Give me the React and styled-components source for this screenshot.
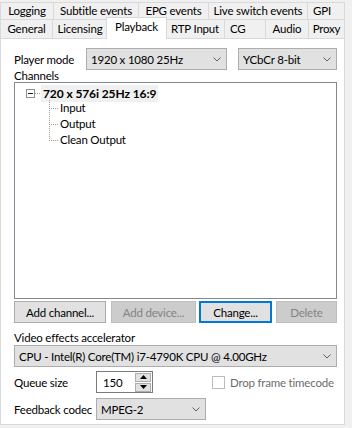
import React from 'react';
import styled, { createGlobalStyle } from 'styled-components';

const GlobalStyle = createGlobalStyle`
  html, body {
    margin: 0;
    padding: 0;
    background: #f0f0f0;
  }
  body {
    font-family: Lato, "Liberation Sans", sans-serif;
    font-size: 11.5px;
    letter-spacing: -0.2px;
    color: #000;
  }
  * { box-sizing: border-box; }
`;

const Window = styled.div`
  width: 352px;
  height: 428px;
  background: #f0f0f0;
  padding-top: 2px;
  overflow: hidden;
`;

const TabRow = styled.div`
  display: flex;
  width: 345px;
  height: ${p => p.$h}px;
`;

const Tab = styled.div`
  width: ${p => p.$w}px;
  flex: none;
  display: flex;
  align-items: center;
  justify-content: ${p => (p.$left ? 'flex-start' : 'center')};
  padding-left: ${p => (p.$left ? 5 : 0)}px;
  border-top: 1px solid #d9d9d9;
  border-left: 1px solid #d9d9d9;
  border-right: ${p => (p.$last ? '1px solid #d9d9d9' : 'none')};
  background: #f0f0f0;
  white-space: nowrap;
  line-height: 1;
`;

const ActiveTab = styled(Tab)`
  position: relative;
  z-index: 1;
  width: ${p => p.$w + 3}px;
  height: 22px;
  margin: -2px -2px 0 -1px;
  padding-bottom: 3px;
  border-right: 1px solid #d9d9d9;
  background: #fff;
`;

const Panel = styled.div`
  width: 345px;
  height: 387px;
  border: 1px solid #d9d9d9;
  background: #fff;
  padding: 9px 7px 0 13px;
  display: flex;
  flex-direction: column;
`;

const Row = styled.div`
  display: flex;
  align-items: center;
  height: 22px;
  margin-top: ${p => p.$mt || 0}px;
`;

const Label = styled.span`
  width: ${p => (p.$w ? `${p.$w}px` : 'auto')};
  flex: none;
  white-space: nowrap;
`;

const BlockLabel = styled.div`
  height: ${p => p.$h}px;
  margin-top: ${p => p.$mt || 0}px;
  line-height: ${p => p.$h}px;
  white-space: nowrap;
`;

const Combo = styled.div`
  width: ${p => (p.$w ? `${p.$w}px` : '100%')};
  height: 22px;
  flex: none;
  margin-left: ${p => p.$ml || 0}px;
  border: 1px solid #adadad;
  background: #e1e1e1;
  display: flex;
  align-items: center;
  padding: 0 0 0 4px;
  white-space: nowrap;
`;

const ComboText = styled.span`
  flex: 1;
  overflow: hidden;
`;

const ChevronBox = styled.span`
  width: 17px;
  display: flex;
  justify-content: center;
  margin-right: 1px;
`;

const Chevron = () => (
  <ChevronBox>
    <svg width="8" height="5" viewBox="0 0 8 5">
      <path d="M0.5 0.5 L4 4 L7.5 0.5" fill="none" stroke="#606060" strokeWidth="1" />
    </svg>
  </ChevronBox>
);

const TreeBox = styled.div`
  width: 323px;
  height: 217px;
  flex: none;
  border: 1px solid #828790;
  background: #fff;
  padding: 2px 0 0 11px;
`;

const RootRow = styled.div`
  display: flex;
  align-items: center;
  height: 17px;
`;

const Expander = styled.span`
  width: 9px;
  height: 9px;
  border: 1px solid #919191;
  display: flex;
  align-items: center;
  justify-content: center;
  background: #fff;
  &::before {
    content: '';
    width: 5px;
    height: 1px;
    background: #1a1a1a;
  }
`;

const Stub = styled.span`
  width: ${p => p.$w}px;
  border-top: 1px dotted #a0a0a0;
  align-self: center;
`;

const RootLabel = styled.span`
  font-weight: 700;
  font-size: 12px;
  letter-spacing: -0.1px;
  background: #f0f0f0;
  padding: 0 2px;
  height: 17px;
  line-height: 17px;
  margin-left: 1px;
`;

const Children = styled.div`
  position: relative;
  margin: -2px 0 0 23px;
  &::before {
    content: '';
    position: absolute;
    left: 0;
    top: 0;
    height: 41px;
    border-left: 1px dotted #a0a0a0;
  }
`;

const ChildRow = styled.div`
  display: flex;
  align-items: center;
  height: 16px;
  line-height: 16px;
`;

const ChildText = styled.span`
  margin-left: 2px;
`;

const ButtonRow = styled.div`
  display: flex;
  height: 22px;
  margin-top: 2px;
`;

const Button = styled.div`
  width: ${p => p.$w}px;
  margin-left: ${p => p.$ml || 0}px;
  height: 22px;
  flex: none;
  display: flex;
  align-items: center;
  justify-content: center;
  background: ${p => (p.$disabled ? '#cccccc' : '#e1e1e1')};
  color: ${p => (p.$disabled ? '#838383' : '#000')};
  border: ${p =>
    p.$focused ? '2px solid #0078d7' : p.$disabled ? '1px solid #bfbfbf' : '1px solid #adadad'};
  white-space: nowrap;
`;

const Spin = styled.div`
  width: 57px;
  height: 22px;
  flex: none;
  border: 1px solid #7a7a7a;
  background: #fff;
  display: flex;
  align-items: center;
  padding: 0 1px 0 6px;
`;

const SpinValue = styled.span`
  flex: 1;
`;

const SpinButtons = styled.div`
  display: flex;
  flex-direction: column;
  gap: 1px;
  width: 16px;
`;

const SpinButton = styled.div`
  height: 9px;
  border: 1px solid #adadad;
  background: #e1e1e1;
  display: flex;
  align-items: center;
  justify-content: center;
`;

const Arrow = ({ up }) => (
  <svg width="7" height="4" viewBox="0 0 7 4">
    <path d={up ? 'M0 4 L3.5 0 L7 4 Z' : 'M0 0 L3.5 4 L7 0 Z'} fill="#000" />
  </svg>
);

const CheckWrap = styled.div`
  display: flex;
  align-items: center;
  margin-left: 59px;
  color: #6d6d6d;
  white-space: nowrap;
`;

const CheckBox = styled.span`
  width: 13px;
  height: 13px;
  flex: none;
  border: 1px solid #bcbcbc;
  background: #fff;
  margin-right: 5px;
`;

const row1 = [
  ['Logging', 53],
  ['Subtitle events', 85],
  ['EPG events', 70],
  ['Live switch events', 99],
  ['GPI', 37],
];

const row2 = [
  ['General', 52],
  ['Licensing', 55],
  ['Playback', 58],
  ['RTP Input', 59],
  ['CG', 41],
  ['Audio', 43],
  ['Proxy', 36],
];

export default function App() {
  return (
    <Window>
      <GlobalStyle />
      <TabRow $h={17}>
        {row1.map(([name, w], i) => (
          <Tab key={name} $w={i === row1.length - 1 ? w + 1 : w} $last={i === row1.length - 1} $left={name === 'GPI'}>
            {name}
          </Tab>
        ))}
      </TabRow>
      <TabRow $h={19}>
        {row2.map(([name, w], i) =>
          name === 'Playback' ? (
            <ActiveTab key={name} $w={w}>{name}</ActiveTab>
          ) : (
            <Tab key={name} $w={i === row2.length - 1 ? w + 1 : w} $last={i === row2.length - 1} $left={name === 'CG'}>
              {name}
            </Tab>
          )
        )}
      </TabRow>
      <Panel>
        <Row>
          <Label $w={72}>Player mode</Label>
          <Combo $w={141}>
            <ComboText>1920 x 1080 25Hz</ComboText>
            <Chevron />
          </Combo>
          <Combo $w={99} $ml={11}>
            <ComboText>YCbCr 8-bit</ComboText>
            <Chevron />
          </Combo>
        </Row>
        <BlockLabel $h={12}>Channels</BlockLabel>
        <TreeBox>
          <RootRow>
            <Expander />
            <Stub $w={5} />
            <RootLabel>720 x 576i 25Hz 16:9</RootLabel>
          </RootRow>
          <Children>
            {['Input', 'Output', 'Clean Output'].map(c => (
              <ChildRow key={c}>
                <Stub $w={9} />
                <ChildText>{c}</ChildText>
              </ChildRow>
            ))}
          </Children>
        </TreeBox>
        <ButtonRow>
          <Button $w={92}>Add channel...</Button>
          <Button $w={85} $ml={5} $disabled>Add device...</Button>
          <Button $w={73} $ml={3} $focused>Change...</Button>
          <Button $w={61} $ml={4} $disabled>Delete</Button>
        </ButtonRow>
        <BlockLabel $h={15} $mt={7}>Video effects accelerator</BlockLabel>
        <Combo>
          <ComboText>CPU - Intel(R) Core(TM) i7-4790K CPU @ 4.00GHz</ComboText>
          <Chevron />
        </Combo>
        <Row $mt={4}>
          <Label $w={82}>Queue size</Label>
          <Spin>
            <SpinValue>150</SpinValue>
            <SpinButtons>
              <SpinButton><Arrow up /></SpinButton>
              <SpinButton><Arrow /></SpinButton>
            </SpinButtons>
          </Spin>
          <CheckWrap>
            <CheckBox />
            Drop frame timecode
          </CheckWrap>
        </Row>
        <Row $mt={5}>
          <Label $w={82}>Feedback codec</Label>
          <Combo $w={110}>
            <ComboText>MPEG-2</ComboText>
            <Chevron />
          </Combo>
        </Row>
      </Panel>
    </Window>
  );
}
